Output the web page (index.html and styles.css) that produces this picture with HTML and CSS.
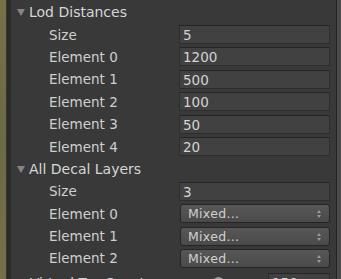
FILE: index.html
```html
<!DOCTYPE html>
<html lang="en">
<head>
    <meta charset="UTF-8">
    <title>Inspector - Decal Settings</title>
    <link rel="stylesheet" href="styles.css">
</head>
<body>
    <div class="frame">
        <div class="scene-edge"></div>
        <div class="divider"></div>

        <div class="inspector">
            <!-- Lod distances array -->
            <div class="row header"><span class="foldout"></span>Lod Distances</div>
            <div class="row"><span class="label">Size</span><span class="field">5</span></div>
            <div class="row"><span class="label">Element 0</span><span class="field">1200</span></div>
            <div class="row"><span class="label">Element 1</span><span class="field">500</span></div>
            <div class="row"><span class="label">Element 2</span><span class="field">100</span></div>
            <div class="row"><span class="label">Element 3</span><span class="field">50</span></div>
            <div class="row"><span class="label">Element 4</span><span class="field">20</span></div>

            <!-- Decal layers array -->
            <div class="row header"><span class="foldout"></span>All Decal Layers</div>
            <div class="row"><span class="label">Size</span><span class="field">3</span></div>
            <div class="row"><span class="label">Element 0</span><span class="popup">Mixed...<span class="arrows"></span></span></div>
            <div class="row"><span class="label">Element 1</span><span class="popup">Mixed...<span class="arrows"></span></span></div>
            <div class="row"><span class="label">Element 2</span><span class="popup">Mixed...<span class="arrows"></span></span></div>

            <div class="row top-level">
                <span class="label">Virtual Tex Count</span>
                <span class="slider"><span class="thumb"></span></span>
                <span class="field small">150</span>
            </div>
        </div>

        <div class="scrollbar"></div>
    </div>
</body>
</html>
```

FILE: styles.css
```css
html, body {
    margin: 0;
    height: 100%;
    overflow: hidden;
}

body {
    font-family: "DejaVu Sans", Verdana, sans-serif;
    font-size: 13.5px;
    color: #cfcfcf;
    background-color: #393939;
}

.frame {
    display: flex;
    height: 100%;
}

.scene-edge {
    flex: 0 0 6px;
    background: linear-gradient(#77714a, #6a6a44 50%, #75704a);
}

.divider {
    flex: 0 0 5px;
    background-color: #2b2b2b;
    border-left: 1px solid #333;
    box-sizing: border-box;
}

.inspector {
    flex: 1;
    min-width: 0;
    padding-top: 1px;
    padding-right: 6px;
}

.row {
    display: flex;
    align-items: center;
    height: 22.4px;
}

.header {
    padding-left: 6px;
    font-size: 14px;
    color: #d6d6d6;
}

.foldout {
    width: 0;
    height: 0;
    border-left: 4.5px solid transparent;
    border-right: 4.5px solid transparent;
    border-top: 7px solid #858585;
    margin-right: 4px;
    margin-top: 1px;
}

.label {
    width: 130px;
    padding-left: 38px;
    flex-shrink: 0;
    white-space: nowrap;
}

.field {
    flex: 1;
    height: 19px;
    line-height: 18px;
    padding-left: 3px;
    background-color: #414141;
    border: 1px solid #2e2e2e;
    border-top-color: #252525;
    box-sizing: border-box;
    color: #d4d4d4;
}

.popup {
    flex: 1;
    position: relative;
    height: 19px;
    line-height: 18px;
    padding-left: 7px;
    margin-left: 1px;
    background: linear-gradient(#575757, #4a4a4a);
    border: 1px solid #252525;
    border-radius: 3px;
    box-sizing: border-box;
    font-size: 12.5px;
    color: #d0d0d0;
    letter-spacing: 0.3px;
}

.arrows {
    position: absolute;
    right: 8px;
    top: 5px;
    width: 0;
    height: 0;
    border-left: 2.5px solid transparent;
    border-right: 2.5px solid transparent;
    border-bottom: 3px solid #9a9a9a;
}

.arrows::after {
    content: "";
    position: absolute;
    left: -2.5px;
    top: 5px;
    border-left: 2.5px solid transparent;
    border-right: 2.5px solid transparent;
    border-top: 3px solid #9a9a9a;
}

.top-level {
    margin-top: 2px;
}

.top-level .label {
    width: 149px;
    padding-left: 19px;
}

.slider {
    position: relative;
    flex: 1;
    height: 2px;
    background-color: #2a2a2a;
    margin: 0 8px 0 4px;
}

.thumb {
    position: absolute;
    left: 30px;
    top: -5px;
    width: 11px;
    height: 11px;
    border-radius: 50%;
    background-color: #9c9c9c;
}

.field.small {
    flex: 0 0 62px;
}

.scrollbar {
    flex: 0 0 5px;
    border-left: 1px solid #222;
    background-color: #4a4a4a;
    box-sizing: border-box;
}
```
